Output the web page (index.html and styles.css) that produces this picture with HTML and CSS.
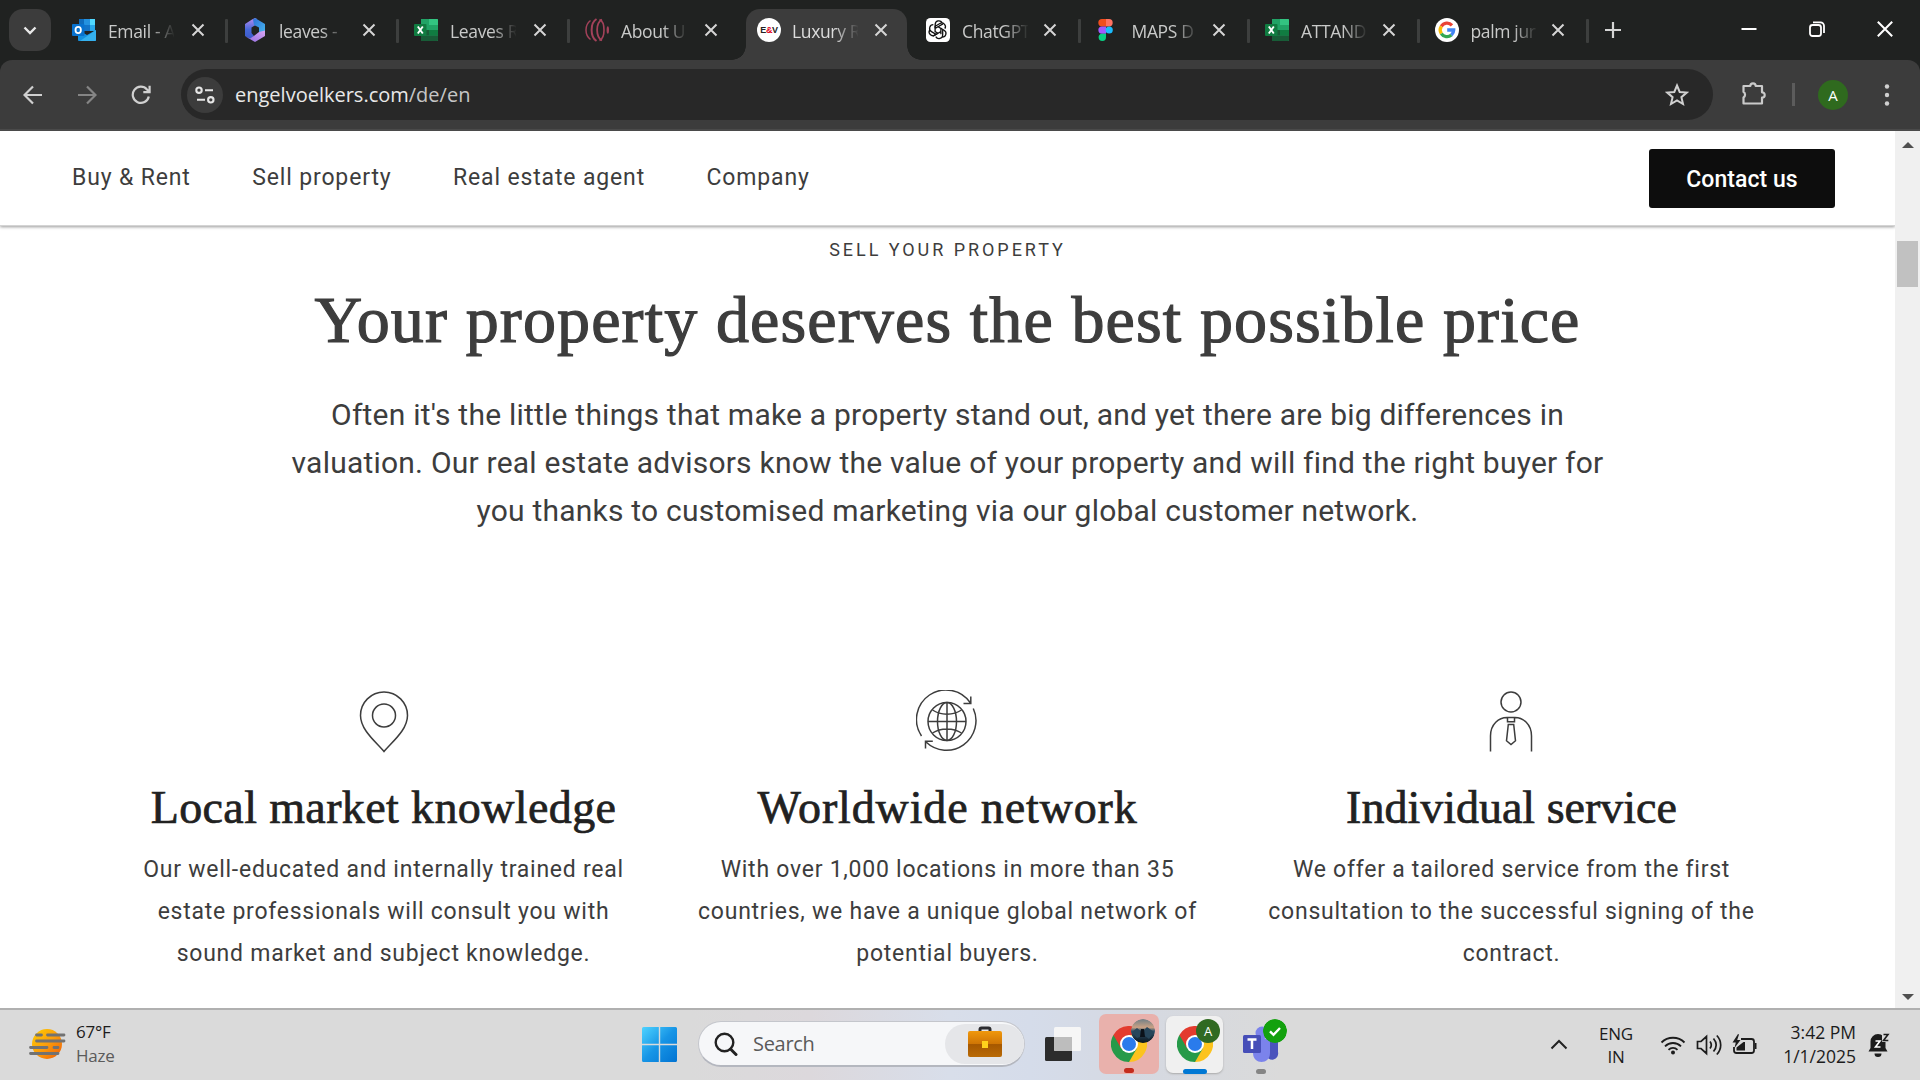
FILE: index.html
```html
<!DOCTYPE html>
<html lang="en">
<head>
<meta charset="utf-8">
<title>Luxury Real Estate</title>
<link rel="stylesheet" href="styles.css">
</head>
<body>
<svg class="defs" width="0" height="0" aria-hidden="true">
  <defs>
    <linearGradient id="hexA" x1="0" y1="0" x2="0" y2="1"><stop offset="0" stop-color="#b98cf0"/><stop offset=".55" stop-color="#4668d8"/><stop offset="1" stop-color="#3b59c8"/></linearGradient>
    <linearGradient id="hexB" x1="0" y1="0" x2="1" y2="1"><stop offset="0" stop-color="#2f6fd8"/><stop offset="1" stop-color="#46b8ee"/></linearGradient>
    <linearGradient id="hexC" x1="0" y1="1" x2="1" y2="0"><stop offset="0" stop-color="#8f6be0"/><stop offset="1" stop-color="#d9a6f2"/></linearGradient>
    <linearGradient id="win" x1="0" y1="0" x2="1" y2="1"><stop offset="0" stop-color="#4fd3ff"/><stop offset=".5" stop-color="#1795e6"/><stop offset="1" stop-color="#0173d2"/></linearGradient>
    <linearGradient id="sun" x1="0" y1="0" x2="1" y2="1"><stop offset="0" stop-color="#ffd000"/><stop offset=".5" stop-color="#fb9d0c"/><stop offset="1" stop-color="#ee5a06"/></linearGradient>
    <linearGradient id="case" x1="0" y1="0" x2="0" y2="1"><stop offset="0" stop-color="#f0980c"/><stop offset=".5" stop-color="#cf7505"/><stop offset=".52" stop-color="#a65800"/><stop offset="1" stop-color="#b96a05"/></linearGradient>
    <linearGradient id="pic" x1="0" y1="0" x2="0" y2="1"><stop offset="0" stop-color="#6f7f86"/><stop offset=".35" stop-color="#c9a184"/><stop offset=".5" stop-color="#31546b"/><stop offset="1" stop-color="#0a141c"/></linearGradient>
    <symbol id="x" viewBox="0 0 14 14"><path d="M1.500 1.500l11 11M12.500 1.500l-11 11" stroke="currentColor" stroke-width="2" fill="none"/></symbol>
    <symbol id="excel" viewBox="0 0 24 24">
      <path d="M7 1h16a1 1 0 0 1 1 1v20a1 1 0 0 1-1 1H7z" fill="#21a366"/><path d="M15 1h8a1 1 0 0 1 1 1v5h-9z" fill="#33c481"/><path d="M7 12h8v5.500H7z" fill="#185c37"/><path d="M15 12h9v5.500h-9z" fill="#107c41"/><path d="M7 17.500h17V22a1 1 0 0 1-1 1H7z" fill="#185c37"/>
      <rect x="0" y="6" width="12.500" height="12" rx="1" fill="#107c41"/><path d="M3.800 8.500l5 7M8.800 8.500l-5 7" stroke="#fff" stroke-width="1.900"/>
    </symbol>
    <symbol id="rings" viewBox="0 0 24 24"><g fill="none" stroke="#a3425a"><path d="M5.500 2.500C-.5 7-.5 17 5.500 21.500" stroke-width="1.500"/><path d="M11.500 1C5 5 5 19 11.500 23" stroke-width="2"/><path d="M17 1.500C10.500 5 10.500 19 17 22.500" stroke-width="1.800"/><path d="M14.500 1.500C20.500 4 20.500 20 14.500 22.500" stroke-width="1.600"/></g><ellipse cx="22.800" cy="12" rx="1.200" ry="3.800" fill="#a3425a"/></symbol>
    <symbol id="chrome" viewBox="0 0 36 36">
      <path d="M18 18L33.600 9A18 18 0 0 1 18 36z" fill="#fcc31e"/><path d="M18 18V36A18 18 0 0 1 2.400 9z" fill="#269a49"/><path d="M18 9h15.600L25.800 22.500z" fill="#fcc31e"/><path d="M25.800 22.500L18 36 10.200 22.500z" fill="#269a49"/><path d="M2.400 9A18 18 0 0 1 33.600 9H18L10.200 22.500z" fill="#e33b2e"/>
      <circle cx="18" cy="18" r="9" fill="#fff"/><circle cx="18" cy="18" r="7" fill="#2a7bec"/>
    </symbol>
  </defs>
</svg>

<div class="window">
  <div class="tabstrip">
    <div class="tab-search"><svg width="14" height="9" viewBox="0 0 14 9"><path d="M1.500 1.500L7 7l5.500-5.500" stroke="#e8e8e8" stroke-width="2.400" fill="none"/></svg></div>
    <div class="tab wide">
      <svg class="fav" viewBox="0 0 24 24"><path d="M7 1h16v12H7z" fill="#0f6cbd"/><path d="M12 1h6v6h-6z" fill="#2492e0"/><path d="M18 1h5v6h-5z" fill="#50d9ff"/><path d="M12 7h6v6h-6z" fill="#1374c9"/><path d="M18 7h5v6h-5z" fill="#28a8ea"/><path d="M6 12l9 5 9-5v10a1 1 0 0 1-1 1H7a1 1 0 0 1-1-1z" fill="#1490df"/><path d="M24 12L8 23h15a1 1 0 0 0 1-1z" fill="#35b1ee"/><rect y="6" width="12.500" height="12" rx="1" fill="#0872cf"/><ellipse cx="6.200" cy="12" rx="2.700" ry="3.100" fill="none" stroke="#fff" stroke-width="1.800"/></svg>
      <span class="label">Email - A</span><svg class="close"><use href="#x"/></svg>
    </div>
    <div class="tab wide">
      <svg class="fav" viewBox="0 0 24 24"><path d="M12 0l-3 1.500L2 6v12l5 3 4-3-2.500-3V9.500L14 6V1z" fill="url(#hexA)"/><path d="M12 0l10 6v10l-6-2V9.500L11 7 10 1.500z" fill="url(#hexB)"/><path d="M2.500 18.500L12 24l10-6v-5.500l-6 1.500-4.500 3.500L7 20.500z" fill="url(#hexC)"/></svg>
      <span class="label">leaves -</span><svg class="close"><use href="#x"/></svg>
    </div>
    <div class="tab wide"><svg class="fav"><use href="#excel"/></svg><span class="label">Leaves R</span><svg class="close"><use href="#x"/></svg></div>
    <div class="tab wide last"><svg class="fav"><use href="#rings"/></svg><span class="label">About U</span><svg class="close"><use href="#x"/></svg></div>
    <div class="tab active">
      <span class="fav ev">E<b>&amp;</b>V</span>
      <span class="label">Luxury R</span><svg class="close"><use href="#x"/></svg>
    </div>
    <div class="tab bare">
      <svg class="fav" viewBox="0 0 24 24"><rect width="24" height="24" rx="4.500" fill="#fff"/><g fill="none" stroke="#111" stroke-width="1.300"><g id="petal"><path d="M9.200 10.300V6.600a3.700 3.700 0 0 1 6.900-1.900M9.200 8.200L13.900 5.500a3.700 3.700 0 0 1 5 5.100"/></g><use href="#petal" transform="rotate(120 12 12)"/><use href="#petal" transform="rotate(240 12 12)"/><path d="M12 8.700l2.900 1.650v3.300L12 15.300l-2.900-1.650v-3.300zM14.900 10.300v6M9.100 13.700v-6M12 15.300l-5 2.800M12 8.700l5-2.800"/></g></svg>
      <span class="label">ChatGPT</span><svg class="close"><use href="#x"/></svg>
    </div>
    <div class="tab">
      <svg class="fav" viewBox="0 0 24 24"><path d="M10 1H6a3.700 3.700 0 0 0 0 7.400h4z" fill="#f24e1e"/><path d="M10 1h3a3.700 3.700 0 0 1 0 7.400h-3z" fill="#ff7262"/><path d="M10 8.400H6a3.600 3.600 0 0 0 0 7.300h4z" fill="#a259ff"/><circle cx="13.200" cy="12" r="3.600" fill="#1abcfe"/><path d="M6 15.700h4v3.600a3.700 3.700 0 1 1-4-3.600z" fill="#0acf83"/></svg>
      <span class="label">MAPS D</span><svg class="close"><use href="#x"/></svg>
    </div>
    <div class="tab"><svg class="fav"><use href="#excel"/></svg><span class="label">ATTAND</span><svg class="close"><use href="#x"/></svg></div>
    <div class="tab">
      <svg class="fav" viewBox="0 0 24 24"><circle cx="12" cy="12" r="12" fill="#fff"/><g fill="none" stroke-width="3.300"><path d="M6.300 8.400A6.700 6.700 0 0 1 17 7.300" stroke="#ea4335"/><path d="M6.300 15.600a6.700 6.700 0 0 1 0-7.200" stroke="#fbbc05"/><path d="M16.400 17A6.700 6.700 0 0 1 6.300 15.600" stroke="#34a853"/><path d="M12.200 12h6.500a6.700 6.700 0 0 1-2.300 5" stroke="#4285f4"/></g></svg>
      <span class="label">palm jur</span><svg class="close"><use href="#x"/></svg>
    </div>
    <svg class="newtab" width="16" height="16" viewBox="0 0 16 16"><path d="M8 0v16M0 8h16" stroke="#d5d5d5" stroke-width="2.200"/></svg>
    <div class="controls">
      <svg width="16" height="16" viewBox="0 0 16 16"><path d="M.5 8h15" stroke="#fff" stroke-width="2"/></svg>
      <svg width="16" height="16" viewBox="0 0 16 16" fill="none" stroke="#fff" stroke-width="1.800"><rect x="1" y="4" width="11" height="11" rx="2.500"/><path d="M4 1.300h7.500a3.500 3.500 0 0 1 3.500 3.500V12"/></svg>
      <svg width="16" height="16" viewBox="0 0 16 16"><path d="M.8.800l14.400 14.400M15.200.800L.8 15.200" stroke="#fff" stroke-width="2"/></svg>
    </div>
  </div>

  <div class="toolbar">
    <svg class="tool" width="20" height="20" viewBox="0 0 20 20" fill="none" stroke="#d0d0d0" stroke-width="2.200"><path d="M19 10H2M10 1.500L1.500 10l8.500 8.500"/></svg>
    <svg class="tool" width="20" height="20" viewBox="0 0 20 20" fill="none" stroke="#858585" stroke-width="2.200"><path d="M1 10h17M10 1.500l8.500 8.500-8.500 8.500"/></svg>
    <svg class="tool" width="20" height="20" viewBox="0 0 20 20" fill="none" stroke="#d0d0d0" stroke-width="2.200"><path d="M17.800 11.500A8.100 8.100 0 1 1 16 4.500l2 2M18.600 .8v6.300h-6.300"/></svg>
    <div class="omnibox">
      <span class="chip"><svg width="20" height="18" viewBox="0 0 20 18" fill="none" stroke="#e6e6e6" stroke-width="2.100"><circle cx="4" cy="4.200" r="2.700"/><path d="M10 4.200h8M2 13.800h8"/><circle cx="15.800" cy="13.800" r="2.700"/></svg></span>
      <span class="url">engelvoelkers.com<i>/de/en</i></span>
      <svg class="star" width="24" height="24" viewBox="0 0 24 24"><path d="M12 2.500l2.700 6.500 7 .6-5.300 4.600 1.600 6.800-6-3.600L6 21l1.600-6.800L2.300 9.600l7-.6z" fill="none" stroke="#d0d0d0" stroke-width="2"/></svg>
    </div>
    <svg class="puzzle" width="26" height="26" viewBox="0 0 26 26"><path d="M2.500 6h6.800a2.700 2.700 0 0 1 5.400 0H21v6.300a2.700 2.700 0 0 1 0 5.400V23.500H2.500v-6a3.300 3.300 0 0 0 0-5.600z" fill="none" stroke="#cacaca" stroke-width="2.200" stroke-linejoin="round"/></svg>
    <span class="divider"></span>
    <span class="profile">A</span>
    <svg class="dots" width="6" height="24" viewBox="0 0 6 24" fill="#d0d0d0"><circle cx="3" cy="3.500" r="2.200"/><circle cx="3" cy="12" r="2.200"/><circle cx="3" cy="20.500" r="2.200"/></svg>
  </div>

  <div class="viewport">
    <div class="page">
      <header class="site-header">
        <nav><a>Buy &amp; Rent</a><a>Sell property</a><a>Real estate agent</a><a>Company</a></nav>
        <button class="contact">Contact us</button>
      </header>
      <main>
        <p class="kicker">SELL YOUR PROPERTY</p>
        <h1>Your property deserves the best possible price</h1>
        <p class="lead">Often it's the little things that make a property stand out, and yet there are big differences in<br>valuation. Our real estate advisors know the value of your property and will find the right buyer for<br>you thanks to customised marketing via our global customer network.</p>
        <div class="features">
          <section>
            <svg width="64" height="64" viewBox="0 0 64 64"><path d="M32 61.500C24 52 8.500 40 8.500 25.500a23.500 23.500 0 0 1 47 0C55.500 40 40 52 32 61.500z"/><circle cx="32" cy="25.500" r="11.500"/></svg>
            <h2>Local market knowledge</h2>
            <p>Our well-educated and internally trained real<br>estate professionals will consult you with<br>sound market and subject knowledge.</p>
          </section>
          <section>
            <svg width="64" height="64" viewBox="1 0 64 64"><circle cx="32" cy="31.500" r="19"/><ellipse cx="32" cy="31.500" rx="9.500" ry="19"/><path d="M32 12.500v38M13 31.500h38M17.500 20c8 5.500 21 5.500 29 0M17.500 43c8-5.500 21-5.500 29 0M6.500 46A29.500 29.500 0 0 1 55.500 13M55.800 6.500V13.600H48.500M58.300 18.500A29.500 29.500 0 0 1 11 52M10.500 58.500V51.200H17.800"/></svg>
            <h2>Worldwide network</h2>
            <p>With over 1,000 locations in more than 35<br>countries, we have a unique global network of<br>potential buyers.</p>
          </section>
          <section>
            <svg width="64" height="64" viewBox="1 0 64 64"><circle cx="32" cy="12" r="10"/><path d="M11.500 61.500V46C11.500 34 20 27.500 28 27.500h8C44 27.500 52.500 34 52.500 46v15.500M28.500 27.500v4.300h7v-4.300M29.300 34.500h5.400l1.800 16.300-4.500 3.700-4.500-3.700z"/></svg>
            <h2>Individual service</h2>
            <p>We offer a tailored service from the first<br>consultation to the successful signing of the<br>contract.</p>
          </section>
        </div>
      </main>
    </div>
    <div class="scrollbar"><i class="up"></i><i class="thumb"></i><i class="down"></i></div>
  </div>

  <div class="taskbar">
    <div class="weather">
      <svg width="38" height="32" viewBox="0 0 38 32"><circle cx="18" cy="16" r="15" fill="url(#sun)"/><path d="M7.500 7h5M18.500 7H35M7.500 13H35M1.500 19.500H18M25 19.500h4M1.500 25.500H29" stroke="#727272" stroke-width="2.800" stroke-linecap="round"/></svg>
      <div><b>67°F</b><span>Haze</span></div>
    </div>
    <div class="dock">
      <svg class="start" width="35" height="35" viewBox="0 0 35 35"><path d="M0 1.500A1.500 1.500 0 0 1 1.500 0H16.800V16.800H0zM18.200 0H33.500A1.500 1.500 0 0 1 35 1.500V16.800H18.200zM0 18.200H16.800V35H1.500A1.500 1.500 0 0 1 0 33.500zM18.200 18.200H35V33.500A1.500 1.500 0 0 1 33.500 35H18.200z" fill="url(#win)"/></svg>
      <div class="search">
        <svg width="24" height="24" viewBox="0 0 24 24" fill="none" stroke="#222" stroke-width="2.400"><circle cx="10.500" cy="10.500" r="8.800"/><path d="M16.500 17l5.500 5.500" stroke-width="3" stroke-linecap="round"/></svg>
        <span>Search</span>
        <div class="highlight"><svg width="34" height="32" viewBox="0 0 34 32"><path d="M12 6V3.500A1.500 1.500 0 0 1 13.500 2h7A1.500 1.500 0 0 1 22 3.500V6" fill="none" stroke="#2c2c30" stroke-width="3"/><rect y="5" width="34" height="26" rx="2" fill="url(#case)"/><rect x="14" y="15" width="6" height="7" fill="#ffd21c"/></svg></div>
      </div>
      <svg class="taskview" width="36" height="36" viewBox="0 0 36 36"><rect x="0" y="11" width="27" height="24" rx="1.500" fill="#2c2c2c"/><rect x="9" y="1" width="27" height="24" rx="1.500" fill="#f6f6f6"/><path d="M9 11h18v14H10.500A1.500 1.500 0 0 1 9 23.500z" fill="#bdbdbd"/></svg>
      <div class="app alert"><svg width="36" height="36"><use href="#chrome"/></svg><svg class="badge" viewBox="0 0 24 24"><circle cx="12" cy="12" r="12" fill="url(#pic)"/><path d="M1 13l5-4 5 4 5-5 7 5-5 7-5-4-7 3z" fill="#27465a"/><path d="M10 10h3l1 8h-5z" fill="#0b1219"/></svg><i></i></div>
      <div class="app current"><svg width="36" height="36"><use href="#chrome"/></svg><span class="badge initial">A</span><i></i></div>
      <div class="app teams"><svg width="38" height="38" viewBox="0 0 38 38"><circle cx="29" cy="9" r="4.500" fill="#5059c9"/><path d="M24 15h12v12a6 6 0 0 1-12 3z" fill="#4b53bc"/><circle cx="20" cy="8" r="6.500" fill="#7b83eb"/><path d="M11 14h17v14c0 12-17 12-17 0z" fill="#7b83eb"/><rect x="1" y="10" width="18" height="18" rx="1.500" fill="#464eb8"/><path d="M5.500 14.500h9M10 14.500V24" stroke="#fff" stroke-width="2.500"/></svg><svg class="badge" viewBox="0 0 24 24"><circle cx="12" cy="12" r="12" fill="#13a10e"/><path d="M7 12.300l3.500 3.500L17 9" fill="none" stroke="#fff" stroke-width="2.400"/></svg><i></i></div>
    </div>
    <div class="tray">
      <svg class="chev" width="18" height="11" viewBox="0 0 18 11"><path d="M1.500 9.500L9 2l7.500 7.500" fill="none" stroke="#222" stroke-width="2"/></svg>
      <div class="lang">ENG<br>IN</div>
      <svg class="wifi" width="26" height="22" viewBox="0 0 26 22" fill="none" stroke="#1c1c1c" stroke-width="1.800"><path d="M1.500 8.500a16.300 16.300 0 0 1 23 0M5 12.300a11.300 11.300 0 0 1 16 0M8.500 15.800a6.400 6.400 0 0 1 9 0"/><circle cx="13" cy="18.500" r="2" fill="#1c1c1c" stroke="none"/></svg>
      <svg class="vol" width="26" height="22" viewBox="0 0 26 22" fill="none" stroke="#1c1c1c" stroke-width="1.700"><path d="M1.500 7.500H5l5.500-5v17L5 14.500H1.500zM14 7.500c1.500 2 1.500 5 0 7M17.500 4.500c3.300 4 3.300 9 0 13M20.800 1.500c5.200 5.500 5.200 13.500 0 19"/></svg>
      <svg class="batt" width="26" height="22" viewBox="0 0 26 22"><path d="M9 5h10.500A2.500 2.500 0 0 1 22 7.500v9a2.500 2.500 0 0 1-2.500 2.500h-15A2.500 2.500 0 0 1 2 16.500V13" fill="none" stroke="#1c1c1c" stroke-width="1.800"/><path d="M23 9h1.500v6H23zM4.500 13.500l7-5.500h1.500v8.500h-8.500zM6 0L.5 8.500h3.300L2.500 14 8.500 6H5.200L7 .5z" fill="#1c1c1c"/></svg>
      <div class="clock">3:42 PM<br>1/1/2025</div>
      <svg class="bell" width="22" height="26" viewBox="0 0 22 26"><path d="M10 2a7.500 7.500 0 0 0-7.500 7.500V16L.5 19.500h19L17.500 16V9.500A7.500 7.500 0 0 0 10 2zM6.500 21.500h7a3.500 3.500 0 0 1-7 0z" fill="#1c1c1c"/><path d="M14 1h8v9h-8z" fill="#dadada"/><path d="M15.500 2.500h4.500l-4.500 6h4.800" fill="none" stroke="#1c1c1c" stroke-width="1.600"/><path d="M7.500 9h4.500L7.500 15H12.500" fill="none" stroke="#fff" stroke-width="1.600"/></svg>
    </div>
  </div>
</div>
</body>
</html>
```
FILE: styles.css
```css
* { box-sizing: border-box; }
body { margin: 0; font-family: "Open Sans", sans-serif; background: #fff; }
svg { display: block; flex: none; }
.defs { position: absolute; }
p, h1, h2 { margin: 0; }
.window { width: 1920px; height: 1080px; display: flex; flex-direction: column; overflow: hidden; }

/* Browser tabs */
.tabstrip { height: 60px; flex: none; background: #202221; display: flex; align-items: flex-start; padding: 9px 27px 0 9px; }
.tab-search { width: 42px; height: 42px; border-radius: 14px; background: #3c3c3c; display: grid; place-items: center; margin-right: 11px; }
.tab { position: relative; width: 169.500px; height: 51px; padding: 0 18px 9px 10px; display: flex; align-items: center; }
.tab.wide { width: 171px; }
.tab.wide.last { width: 172px; padding-right: 19px; }
.tab::after { content: ""; position: absolute; right: 5px; top: 10px; width: 3px; height: 24px; background: #3d3f3e; border-radius: 1px; }
.tab.last::after, .tab.active::after { display: none; }
.tab.active { width: 161px; margin: 0 9px 0 -1px; padding-right: 17px; padding-left: 11px; background: #3c3c3c; border-radius: 14px 14px 0 0; }
.tab.active::before { content: ""; position: absolute; left: -14px; right: -14px; bottom: 0; height: 14px; background: radial-gradient(circle at 0 0, transparent 13.500px, #3c3c3c 14px) 0 0 / 14px 14px no-repeat, radial-gradient(circle at 100% 0, transparent 13.500px, #3c3c3c 14px) 100% 0 / 14px 14px no-repeat; }
.fav { width: 24px; height: 24px; flex: none; }
.ev { border-radius: 50%; background: #fff; color: #222; font: bold 9px/24px "Liberation Sans", sans-serif; text-align: center; letter-spacing: -.3px; }
.ev b { color: #e2001a; }
.label { margin-left: 12px; width: 66px; flex: none; line-height: 26px; padding-top: 2px; font-size: 17.500px; letter-spacing: -.35px; color: #c9cac9; white-space: nowrap; -webkit-mask-image: linear-gradient(90deg, #000 42px, transparent 67px); mask-image: linear-gradient(90deg, #000 42px, transparent 67px); }
.active .label { margin-left: 11px; color: #dcdcdc; }
.close { width: 14px; height: 14px; margin-left: auto; margin-right: 11px; color: #d5d5d5; }
.tab.wide .close { margin-right: 10px; }
.active .close { margin-right: 2px; }
.newtab { margin: 13px 0 0 11px; }
.controls { margin: 12px 0 0 auto; display: flex; gap: 52px; }

/* Toolbar */
.toolbar { height: 71px; flex: none; background: #3c3c3c; border-bottom: 2px solid #4a4a4a; border-radius: 12px 12px 0 0; display: flex; align-items: center; padding: 0 30px 0 23px; }
.tool { margin-right: 34px; }
.omnibox { flex: none; width: 1532px; height: 51px; margin-left: -4px; border-radius: 26px; background: #282828; display: flex; align-items: center; padding: 0 24px 0 6px; }
.chip { width: 36px; height: 36px; border-radius: 50%; background: #3c3c3c; display: grid; place-items: center; }
.url { margin-left: 12px; font-size: 20px; color: #e8e8e8; }
.url i { font-style: normal; color: #c6c6c6; }
.star { margin-left: auto; }
.puzzle { margin-left: 28px; margin-top: -4px; }
.divider { width: 3px; height: 23px; margin-left: 25px; background: #5c5c5c; }
.profile { width: 30px; height: 30px; margin-left: 23px; border-radius: 50%; background: #2f6a1e; color: #fff; font-size: 15px; line-height: 30px; text-align: center; }
.dots { margin-left: auto; }

/* The strip colour shows behind the toolbar's rounded corners */
.window { background: linear-gradient(#202221 100px, #fff 100px); }

/* Page */
.viewport { flex: 1; min-height: 0; display: flex; background: #fff; }
.page { width: 1895px; overflow: hidden; font-family: Roboto, sans-serif; color: #3d3d3d; }
.site-header { height: 95px; padding: 0 60px 0 72px; display: flex; align-items: center; justify-content: space-between; border-bottom: 1px solid #d4d4d4; box-shadow: 0 1px 3px #9a9a9a; }
nav { display: flex; gap: 61.500px; margin-top: -1px; font-size: 23px; letter-spacing: .85px; }
.contact { width: 186px; height: 59px; padding: 2px 0 0; border: 0; border-radius: 3px; background: #0d0d0d; color: #fff; font: 500 23px Roboto, sans-serif; letter-spacing: .05px; }
main { text-align: center; padding-top: 11px; }
.kicker { font-size: 18px; line-height: 26px; letter-spacing: 2.950px; }
h1 { margin-top: 10px; font: 66px/94px "Liberation Serif", serif; letter-spacing: 1.130px; color: #3d3d3d; -webkit-text-stroke: 1.200px #3d3d3d; }
.lead { margin-top: 24px; font-size: 30px; line-height: 48px; letter-spacing: .22px; }
.features { display: grid; grid-template-columns: repeat(3, 564px); justify-content: center; margin-top: 155px; }
.features section { display: flex; flex-direction: column; align-items: center; }
.features svg { fill: none; stroke: #3d3d3d; stroke-width: 1.500; }
h2 { margin-top: 26px; font: 46px/56px "Liberation Serif", serif; letter-spacing: .380px; color: #212121; -webkit-text-stroke: .7px #212121; white-space: nowrap; }
.features section:nth-child(2) h2 { letter-spacing: .860px; }
.features section:nth-child(3) h2 { letter-spacing: 0; }
.features p { margin-top: 13px; font-size: 23px; line-height: 42px; letter-spacing: .75px; }
.scrollbar { width: 25px; background: #f0f0f0; display: flex; flex-direction: column; align-items: center; padding: 11px 0 8px; }
.scrollbar i { display: block; }
.up { border: 6px solid transparent; border-top: 0; border-bottom: 6px solid #505050; }
.thumb { width: 21px; height: 46px; margin-top: 93px; background: #c1c1c1; }
.down { margin-top: auto; border: 6px solid transparent; border-bottom: 0; border-top: 6px solid #505050; }

/* Taskbar */
.taskbar { height: 72px; flex: none; border-top: 2px solid #b0b0b0; background: linear-gradient(90deg, #dadada 690px, #dcd8dc 810px, #d8deea 950px, #d5dcea 1030px, #d5d9e2 1130px, #dadada 1280px); display: flex; align-items: center; color: #1c1c1c; font-size: 17px; }
.weather { width: 642px; padding-left: 29px; display: flex; align-items: center; gap: 9px; padding-bottom: 3px; }
.weather b, .weather span { display: block; font-weight: 400; line-height: 24px; letter-spacing: -.2px; }
.weather span { color: #5b5b5b; }
.dock { display: flex; align-items: center; padding-bottom: 2px; }
.search { width: 327px; height: 46px; margin-left: 21px; border-radius: 23px; border: 1px solid #c4c6cc; border-bottom: 2px solid #b4b7bf; background: #f6f7f9; display: flex; align-items: center; padding-left: 15px; }
.search span { margin-left: 15px; font-size: 20px; letter-spacing: -.3px; color: #5a5a5a; }
.highlight { width: 79px; height: 40px; margin-left: auto; border-radius: 20px; background: #e5e6e9; display: grid; place-items: center; padding-bottom: 3px; }
.taskview { margin-left: 20px; margin-right: 18px; }
.app { position: relative; width: 60px; height: 60px; border-radius: 7px; display: grid; place-items: center; }
.app .badge { position: absolute; width: 24px; height: 24px; left: 32px; top: 5px; border-radius: 50%; }
.app i { position: absolute; bottom: 0; left: 50%; width: 10px; height: 5px; margin-left: -5px; border-radius: 3px; background: #858585; }
.alert { background: #e9b1ac; }
.alert i { background: #c42b1c; bottom: 1px; }
.current { width: 57px; height: 57px; margin-left: 7px; background: #f0f0f0; box-shadow: 0 1px 2px #aaa; }
.current .badge { left: 30px; top: 3px; }
.current i { width: 24px; margin-left: -12px; background: #0078d4; bottom: -1px; }
.initial { background: #306a22; color: #fff; font-size: 13px; line-height: 24px; text-align: center; }
.teams { margin-left: 8px; }
.teams .badge { left: 32px; top: 5px; }
.tray { margin-left: auto; padding-right: 30px; display: flex; align-items: center; line-height: 23px; padding-bottom: 1px; }
.lang { margin-left: 30px; width: 36px; text-align: center; letter-spacing: -.2px; }
.wifi { margin-left: 26px; }
.vol { margin-left: 10px; }
.batt { margin-left: 10px; }
.clock { width: 91px; margin-left: 7px; text-align: right; line-height: 24px; font-size: 17.500px; padding-bottom: 2px; }
.bell { margin-left: 12px; }
```
